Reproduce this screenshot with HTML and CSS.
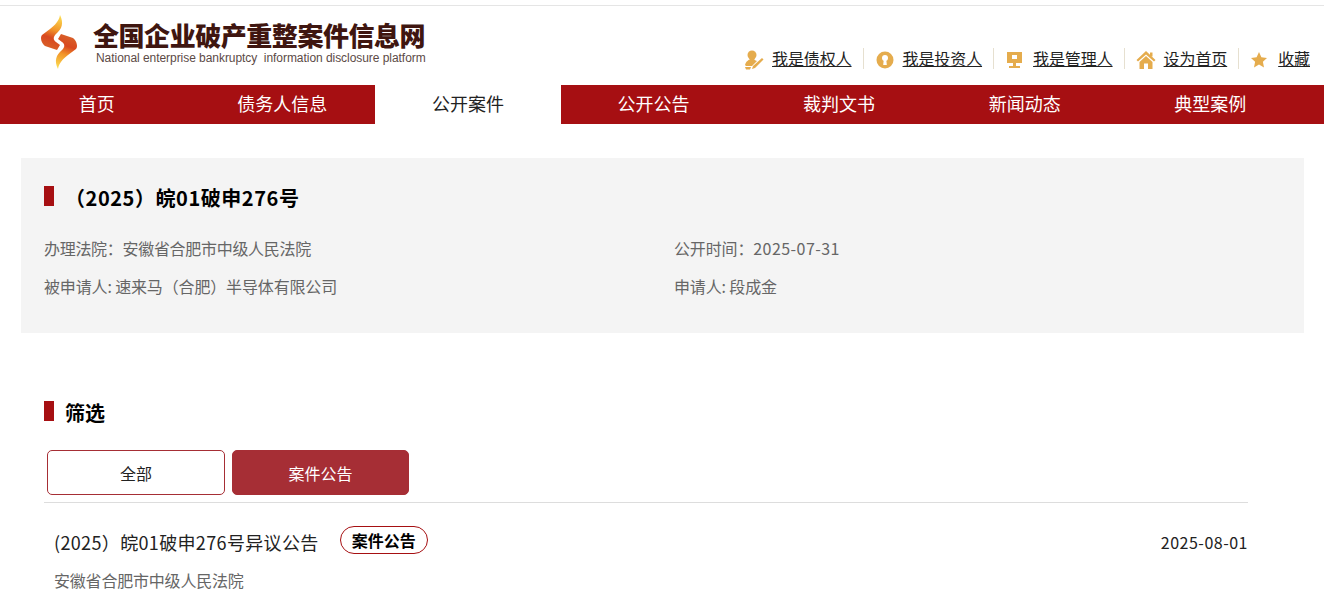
FILE: index.html
```html
<!DOCTYPE html>
<html lang="zh-CN">
<head>
  <meta charset="UTF-8">
  <title>全国企业破产重整案件信息网</title>
  <link rel="stylesheet" href="styles.css">
</head>
<body>
  <div class="header">
    <div class="logo">
      <svg class="logo-mark" width="38" height="56" viewBox="0 0 36 56">
        <defs>
          <linearGradient id="flame" x1="0.6" y1="0" x2="0.4" y2="1">
            <stop offset="0" stop-color="#fbd84f"/>
            <stop offset="0.4" stop-color="#f2952a"/>
            <stop offset="0.65" stop-color="#d9481f"/>
            <stop offset="1" stop-color="#d8642a"/>
          </linearGradient>
        </defs>
        <path id="flameHalf" d="M19 1C23 9 21 15 15 20C12 23 12 26 15 28L19 31L16 36L4 32C0 29 -1 23 1 21L9 15C14 11 18 7 19 1Z" fill="url(#flame)"/>
        <use href="#flameHalf" transform="rotate(180 18 28)"/>
      </svg>
      <div class="logo-text">
        <div class="logo-cn">全国企业破产重整案件信息网</div>
        <div class="logo-en">National enterprise bankruptcy&nbsp; information disclosure platform</div>
      </div>
    </div>
    <div class="top-links">
      <a class="top-link" href="#">
        <svg width="20" height="20" viewBox="0 0 20 20"><circle cx="8" cy="5" r="4.500" fill="#e5ac4d"/><path d="M1 15C2 11 5 10 6 9H10C11 10 12 11 13 11L8 16H2Z" fill="#e5ac4d"/><path d="M18 8L19.500 9.500L11 18L8 19L9 16Z" fill="#e5ac4d"/><path d="M1 17H7L6 19.500H2Z" fill="#e5ac4d"/></svg>
        <span>我是债权人</span>
      </a>
      <a class="top-link" href="#">
        <svg width="20" height="20" viewBox="0 0 20 20"><circle cx="10" cy="10" r="8.500" fill="#e5ac4d"/><circle cx="10" cy="8" r="3" fill="#fff"/><path d="M8.800 9H11.200L11.800 15H8.200Z" fill="#fff"/></svg>
        <span>我是投资人</span>
      </a>
      <a class="top-link" href="#">
        <svg width="20" height="20" viewBox="0 0 20 20"><rect x="2" y="2" width="15" height="11" fill="#e5ac4d"/><rect x="7" y="5" width="5" height="4" fill="#fff"/><rect x="8" y="13" width="3" height="3" fill="#e5ac4d"/><rect x="4" y="16" width="11" height="2" fill="#e5ac4d"/></svg>
        <span>我是管理人</span>
      </a>
      <a class="top-link" href="#">
        <svg width="20" height="20" viewBox="0 0 20 20"><path d="M10 1L19.500 10L18 11.500L10 4.500L2 11.500L0.500 10Z" fill="#e5ac4d"/><path d="M3.500 12L10 6L16.500 12V19H12V13.500H8V19H3.500Z" fill="#e5ac4d"/><rect x="14" y="2.500" width="2.500" height="4" fill="#e5ac4d"/></svg>
        <span>设为首页</span>
      </a>
      <a class="top-link" href="#">
        <svg width="20" height="20" viewBox="0 0 20 20"><path d="M9 2L11.400 7.200L17 7.900L12.900 11.700L14 17.500L9 14.600L4 17.500L5.100 11.700L1 7.900L6.600 7.200Z" fill="#e5ac4d"/></svg>
        <span>收藏</span>
      </a>
    </div>
  </div>

  <div class="nav">
    <a class="nav-item" href="#">首页</a>
    <a class="nav-item" href="#">债务人信息</a>
    <a class="nav-item active" href="#">公开案件</a>
    <a class="nav-item" href="#">公开公告</a>
    <a class="nav-item" href="#">裁判文书</a>
    <a class="nav-item" href="#">新闻动态</a>
    <a class="nav-item" href="#">典型案例</a>
  </div>

  <div class="case-panel">
    <h2 class="section-title case-title">（2025）皖01破申276号</h2>
    <div class="case-info">
      <div class="court">办理法院：安徽省合肥市中级人民法院</div>
      <div>公开时间：<span class="num">2025-07-31</span></div>
      <div>被申请人: 速来马（合肥）半导体有限公司</div>
      <div>申请人: 段成金</div>
    </div>
  </div>

  <div class="filter">
    <h2 class="section-title">筛选</h2>
    <div class="tabs">
      <button class="tab">全部</button>
      <button class="tab selected">案件公告</button>
    </div>
    <div class="notice">
      <div class="notice-row">
        <span class="notice-title">(2025）皖01破申276号异议公告</span>
        <span class="notice-tag">案件公告</span>
        <span class="notice-date">2025-08-01</span>
      </div>
      <div class="notice-court">安徽省合肥市中级人民法院</div>
    </div>
  </div>
</body>
</html>
```

FILE: styles.css
```css
html, body {
  margin: 0;
  padding: 0;
  background: #fff;
  font-family: "Noto Sans CJK SC", "Liberation Sans", sans-serif;
  color: #000;
  overflow: hidden;
}
a {
  color: inherit;
  text-decoration: none;
}
.header {
  height: 80px;
  margin-top: 5px;
  border-top: 1px solid #e5e5e5;
  box-sizing: border-box;
  display: flex;
  justify-content: space-between;
  padding: 8px 14px 0 40px;
}
.logo {
  display: flex;
  gap: 15px;
  height: 56px;
}
.logo-cn {
  font-size: 26px;
  font-weight: 900;
  line-height: 30px;
  margin-top: 6px;
  color: #3f1610;
  letter-spacing: -0.45px;
  white-space: nowrap;
}
.logo-en {
  font-family: "Liberation Sans", sans-serif;
  font-size: 12px;
  line-height: 14px;
  margin: 1px 0 0 3px;
  color: #5c4a46;
  letter-spacing: -0.05px;
  white-space: nowrap;
}
.top-links {
  display: flex;
  align-items: center;
  height: 22px;
  margin-top: 33px;
}
.top-link {
  display: flex;
  align-items: center;
  gap: 8px;
  height: 21px;
  font-size: 16px;
  color: #222;
  padding: 0 11px;
  border-left: 1px solid #e6e0d0;
}
.top-link:first-child { border-left: none; }
.top-link:last-child { padding-right: 0; }
.top-link svg { margin-top: 3px; }
.top-link span {
  text-decoration: underline;
  line-height: 21px;
  letter-spacing: -0.1px;
}
.nav {
  height: 39px;
  background: #a60f12;
  display: flex;
  padding: 0 21px 0 4px;
}
.nav-item {
  flex: 1;
  text-align: center;
  color: #fff;
  font-size: 18px;
  line-height: 37px;
}
.nav-item.active {
  background: #fff;
  color: #222;
}
.case-panel {
  margin: 34px 20px 0 21px;
  height: 175px;
  box-sizing: border-box;
  background: #f4f4f4;
  padding: 28px 23px 0;
}
.section-title {
  margin: 0;
  font-size: 20px;
  font-weight: 700;
  line-height: 20px;
  display: flex;
  align-items: center;
  gap: 11px;
}
.section-title::before {
  content: "";
  width: 10px;
  height: 20px;
  background: #a60f12;
  margin-top: -4px;
}
.case-title {
  margin-top: 2px;
  letter-spacing: 0.55px;
}
.case-info {
  display: grid;
  grid-template-columns: 630px 1fr;
  row-gap: 18px;
  margin-top: 30px;
  font-size: 16px;
  line-height: 20px;
  color: #666;
  letter-spacing: -0.15px;
}
.court {
  letter-spacing: -0.3px;
}
.num {
  letter-spacing: 0.45px;
}
.filter {
  margin: 70px 76px 0 44px;
}
.tabs {
  display: flex;
  gap: 7px;
  margin: 27px 0 0 3px;
  padding-bottom: 7px;
}
.tab {
  width: 178px;
  height: 45px;
  border: 1px solid #a62e35;
  border-radius: 5px;
  background: #fff;
  color: #222;
  font-family: inherit;
  font-size: 16px;
  padding: 1px 0 0;
}
.tab.selected {
  width: 177px;
  background: #a62e35;
  color: #fff;
}
.notice {
  border-top: 1px solid #ddd;
  padding: 22px 0 0 10px;
}
.notice-row {
  display: flex;
  align-items: center;
  height: 30px;
}
.notice-title {
  margin-top: 4px;
  font-size: 18px;
  color: #222;
  letter-spacing: 0.35px;
}
.notice-tag {
  margin-left: 21px;
  width: 88px;
  height: 28px;
  box-sizing: border-box;
  border: 1px solid #a60f12;
  border-radius: 14px;
  text-align: center;
  font-size: 16px;
  font-weight: 700;
  line-height: 26px;
}
.notice-date {
  margin-top: 4px;
  margin-left: auto;
  font-size: 16px;
  color: #222;
  letter-spacing: 0.5px;
}
.notice-court {
  margin-top: 15px;
  font-size: 16px;
  line-height: 20px;
  color: #666;
  letter-spacing: -0.2px;
}
```
